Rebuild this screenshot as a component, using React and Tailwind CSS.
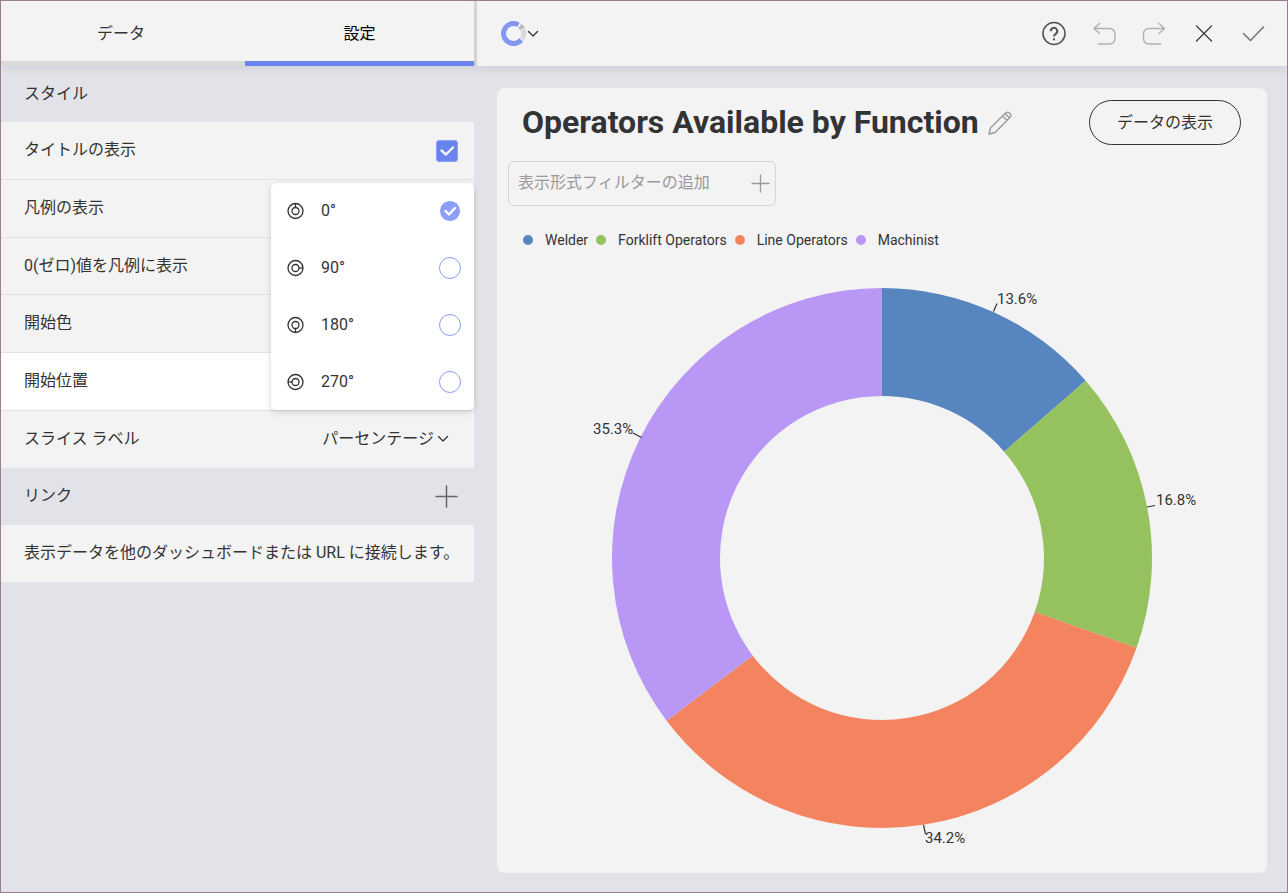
import React, { useState } from "react";

const FONT = "font-[Roboto,'Noto_Sans_CJK_JP',sans-serif]";

const SLICES = [
  { name: "Welder", value: 13.6, color: "#5685c0" },
  { name: "Forklift Operators", value: 16.8, color: "#96c15f" },
  { name: "Line Operators", value: 34.3, color: "#f4845f" },
  { name: "Machinist", value: 35.3, color: "#b997f4" },
];

const CALLOUTS = [
  { text: "13.6%", x: 500, y: 49, line: "M496.5 61.5L500 53.5" },
  { text: "16.8%", x: 659, y: 250, line: "M650 257L658 255.5" },
  { text: "34.2%", x: 428, y: 588, line: "M426.5 575L428.5 584" },
  { text: "35.3%", x: 96, y: 179, line: "M144.5 187.5L136 183" },
];

function slicePaths(cx, cy, outer, inner) {
  const point = (radius, turn) => {
    const a = turn * 2 * Math.PI;
    return `${cx + radius * Math.sin(a)} ${cy - radius * Math.cos(a)}`;
  };
  let start = 0;
  return SLICES.map((s) => {
    const end = start + s.value / 100;
    const d = `M${point(outer, start)}A${outer} ${outer} 0 0 1 ${point(outer, end)}L${point(inner, end)}A${inner} ${inner} 0 0 0 ${point(inner, start)}Z`;
    start = end;
    return { ...s, d };
  });
}

function DonutChart() {
  return (
    <svg viewBox="0 0 770 617" className="block w-full" role="img" aria-label="Operators Available by Function">
      {slicePaths(385, 308, 270, 162).map((s) => (
        <path key={s.name} d={s.d} fill={s.color} />
      ))}
      {CALLOUTS.map((c) => (
        <g key={c.text}>
          <path d={c.line} stroke="#333" strokeWidth="1.2" fill="none" />
          <text x={c.x} y={c.y} dominantBaseline="central" fontSize="15" fill="#333">
            {c.text}
          </text>
        </g>
      ))}
    </svg>
  );
}

function Icon({ size, children, className = "", width = 1.5 }) {
  return (
    <svg
      width={size}
      height={size}
      viewBox={`0 0 ${size} ${size}`}
      fill="none"
      stroke="currentColor"
      strokeWidth={width}
      strokeLinecap="round"
      strokeLinejoin="round"
      className={`shrink-0 ${className}`}
      aria-hidden="true"
    >
      {children}
    </svg>
  );
}

function Chevron() {
  return (
    <Icon size={12} width={1.3}>
      <path d="M1.5 3.5L6 8L10.5 3.5" />
    </Icon>
  );
}

function Plus({ size, className, width = 1.5 }) {
  const m = size / 2;
  return (
    <Icon size={size} className={className} width={width}>
      <path d={`M${m} 1V${size - 1}M1 ${m}H${size - 1}`} />
    </Icon>
  );
}

function Row({ children, className = "h-[58px] bg-[#f3f3f3]" }) {
  return (
    <div className={`flex items-center justify-between border-b border-[#e1e2e8] pr-4 pl-[23px] ${className}`}>
      {children}
    </div>
  );
}

function PositionMenu() {
  const [angle, setAngle] = useState(0);
  return (
    <fieldset className="absolute right-0 bottom-px z-10 grid h-[227px] w-[203px] grid-rows-4 rounded-md bg-white shadow-[0_2px_6px_rgba(0,0,0,0.16)]">
      {[0, 90, 180, 270].map((a) => (
        <label key={a} className="flex items-center pr-[13px] pl-4">
          <Icon size={18} width={1.3}>
            <circle cx="8.5" cy="9" r="7.5" />
            <circle cx="8.5" cy="9" r="3.5" />
            <path d="M8.5 5.5V1.5" transform={`rotate(${a} 8.5 9)`} strokeLinecap="butt" />
          </Icon>
          <span className="ml-4 flex-1">{a}°</span>
          <span className="grid place-items-center">
            <input
              type="radio"
              name="position"
              checked={angle === a}
              onChange={() => setAngle(a)}
              className="peer col-start-1 row-start-1 size-[22px] appearance-none rounded-full border border-[#8b9ff9] checked:border-white checked:bg-[#8b9ff9]"
            />
            <Icon size={22} width={2.4} className="pointer-events-none col-start-1 row-start-1 text-white opacity-0 peer-checked:opacity-100">
              <path d="M6.500 11L10 14.500L16 8" />
            </Icon>
          </span>
        </label>
      ))}
    </fieldset>
  );
}

export default function App() {
  const [showTitle, setShowTitle] = useState(true);
  return (
    <div className={`flex min-h-screen border border-[#9a8090] bg-[#e2e3e8] text-base text-[#333] ${FONT}`}>
      <aside className="relative z-10 flex w-[473px] shrink-0 flex-col">
        <nav className="flex h-[65px] shadow-[0_4px_8px_-2px_rgba(40,50,90,0.12)]">
          <button className="w-[244px] border-b-[5px] border-[#d9d9d9] bg-[#f3f3f3] pt-1.5 pr-1">データ</button>
          <button className="flex-1 border-b-[5px] border-[#6a84ed] bg-[#f3f3f3] pt-1.5 text-black">設定</button>
        </nav>
        <h2 className="flex h-14 items-center pl-[23px]">スタイル</h2>
        <Row>
          <label htmlFor="show-title" className="pb-px">タイトルの表示</label>
          <span className="grid place-items-center">
            <input
              id="show-title"
              type="checkbox"
              checked={showTitle}
              onChange={(e) => setShowTitle(e.target.checked)}
              className="peer col-start-1 row-start-1 size-[22px] appearance-none rounded-[3px] border border-[#8b9ff9] checked:bg-[#6a84ed]"
            />
            <Icon size={22} width={2.4} className="pointer-events-none col-start-1 row-start-1 text-[#f3f3f3] opacity-0 peer-checked:opacity-100">
              <path d="M5.500 10.500L10 14.500L17 7.500" />
            </Icon>
          </span>
        </Row>
        <Row><span className="pb-px">凡例の表示</span></Row>
        <Row className="h-[57px] bg-[#f3f3f3]"><span className="pb-px">0(ゼロ)値を凡例に表示</span></Row>
        <Row><span className="pb-px">開始色</span></Row>
        <div className="relative">
          <Row className="h-[58px] bg-white"><span className="pb-px">開始位置</span></Row>
          <PositionMenu />
        </div>
        <div className="flex h-[57px] items-center justify-between bg-[#f3f3f3] pr-[25px] pb-px pl-[23px]">
          <span>スライス ラベル</span>
          <button className="flex items-center gap-[3px]">
            パーセンテージ
            <Chevron />
          </button>
        </div>
        <div className="flex h-[57px] items-center justify-between pr-4 pl-[23px]">
          <h2 className="pb-px">リンク</h2>
          <button aria-label="リンクの追加">
            <Plus size={23} className="text-[#666]" />
          </button>
        </div>
        <p className="flex h-[57px] items-center bg-[#f3f3f3] pb-px pl-[23px]">
          表示データを他のダッシュボードまたは URL に接続します。
        </p>
      </aside>

      <div className="flex min-w-0 flex-1 flex-col">
        <header className="flex h-[65px] items-center justify-between border-l-[3px] border-[#d6d6d6] bg-[#f3f3f3] pr-5 pl-6 shadow-[0_2px_10px_rgba(40,50,90,0.14)]">
          <button className="flex items-center" aria-label="グラフの種類">
            <svg width="26" height="26" viewBox="0 0 26 26" fill="none" aria-hidden="true">
              <path d="M17.5 3.8A10 10 0 1 0 20.2 18.9" stroke="#8297f0" strokeWidth="5" />
              <path d="M18.9 4.8A10 10 0 0 1 21.5 8" stroke="#bdbdbd" strokeWidth="5.5" />
              <path d="M22 8.7A10 10 0 0 1 21.2 17.9" stroke="#d9d9d9" strokeWidth="5" />
            </svg>
            <Chevron />
          </button>
          <div className="flex items-center gap-6">
            <button aria-label="ヘルプ">
              <Icon size={26} width={1.6} className="text-[#555]">
                <circle cx="13" cy="12.5" r="11" />
                <path d="M9.800 10.300a3.200 3.200 0 1 1 4.900 2.500c-1.200.8-1.700 1.200-1.700 2.700" strokeWidth="2" strokeLinecap="butt" />
                <path d="M13 18.200v.3" strokeWidth="2.200" />
              </Icon>
            </button>
            <button aria-label="元に戻す">
              <Icon size={26} width={1.4} className="text-[#b0b0b0]">
                <path d="M8.500 2.500L3 7.500L8.500 12.500M3.500 7.500H18Q24 7.500 24 13.500V17Q24 23 18 23H7.500" />
              </Icon>
            </button>
            <button aria-label="やり直し">
              <Icon size={26} width={1.4} className="text-[#b0b0b0]">
                <path d="M18 2.500L23.500 7.500L18 12.500M23 7.500H8.500Q2.500 7.500 2.500 13.500V17Q2.500 23 8.500 23H19.500" />
              </Icon>
            </button>
            <button aria-label="閉じる">
              <Icon size={26} width={1.4} className="text-[#444]">
                <path d="M5.500 5L20.500 20M20.500 5L5.500 20" />
              </Icon>
            </button>
            <button aria-label="完了">
              <Icon size={26} width={1.6} className="text-[#777]">
                <path d="M2.500 12.500L9.500 19.500L22.500 6" />
              </Icon>
            </button>
          </div>
        </header>

        <main className="flex flex-1 flex-col pt-[22px] pr-5 pb-[19px] pl-[23px]">
          <section className="flex-1 rounded-lg bg-[#f3f3f3]">
            <div className="flex items-center pt-3 pr-[26px] pl-[25px]">
              <h1 className="text-[32px] leading-[45px] font-bold">Operators Available by Function</h1>
              <button aria-label="タイトルの編集" className="ml-2">
                <Icon size={26} width={1.4} className="text-[#999]">
                  <path d="M2 24L3.500 18L18 3.500Q20.500 1 23 3.500Q25 5.500 22.500 8L8 22.500ZM15.500 6L20 10.500M18 3.500L22.500 8" />
                </Icon>
              </button>
              <button className="ml-auto h-[45px] w-[152px] rounded-full border border-[#333]">データの表示</button>
            </div>
            <button className="mt-4 ml-[11px] flex h-[45px] w-[268px] items-center justify-between rounded-md border border-[#d4d4d4] pr-[5px] pl-[9px] text-[#999]">
              <span className="pb-0.5">表示形式フィルターの追加</span>
              <Plus size={19} width={1.3} />
            </button>
            <ul className="mt-6 flex gap-2 pl-[26px] text-sm leading-5">
              {SLICES.map((s) => (
                <li key={s.name} className="flex items-center gap-3">
                  <svg width="10" height="10" aria-hidden="true">
                    <circle cx="5" cy="5" r="5" fill={s.color} />
                  </svg>
                  {s.name}
                </li>
              ))}
            </ul>
            <DonutChart />
          </section>
        </main>
      </div>
    </div>
  );
}
